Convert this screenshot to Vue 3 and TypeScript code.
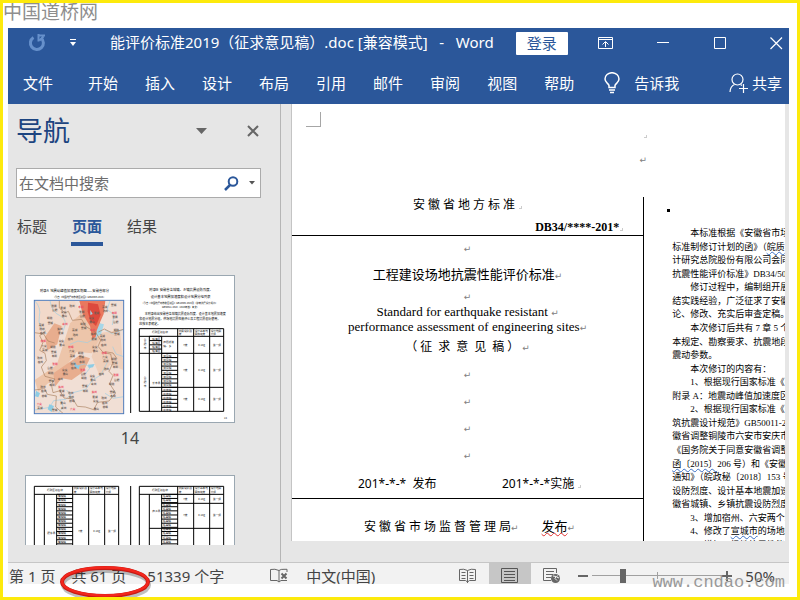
<script setup lang="ts">
import { ref } from 'vue'

interface Line { indent?: boolean; pre?: string; mark?: string; post?: string }
interface Label { x: number; y: number; text: string; red: boolean }

const menus: string[] = ['开始', '插入', '设计', '布局', '引用', '邮件', '审阅', '视图', '帮助']
const tabs: string[] = ['标题', '页面', '结果']
const activeTab = ref('页面')
const query = ref('')
const zoom = ref(50)

const lines: Line[] = [
  { indent: true, pre: '本标准根据《安徽省市场监' },
  { pre: '标准制修订计划的函》（', mark: '皖质' },
  { pre: '计研究总院股份有限公司会同' },
  { pre: '抗震性能评价标准》DB34/5006' },
  { indent: true, pre: '修订过程中，编制组开展' },
  { pre: '结实践经验，广泛征求了安徽' },
  { pre: '论、修改、充实后审查定稿。' },
  { indent: true, pre: '本次修订后共有 7 章 5 个' },
  { pre: '本规定、勘察要求、抗震地段' },
  { pre: '震动参数。' },
  { indent: true, pre: '本次修订的内容有：' },
  { indent: true, pre: '1、根据现行国家标准《中' },
  { pre: '附录 A：地震动峰值加速度区分' },
  { indent: true, pre: '2、根据现行国家标准《中' },
  { pre: '筑抗震设计规范》GB50011-20' },
  { pre: '徽省调整铜陵市六安市安庆市' },
  { pre: '《国务院关于同意安徽省调整' },
  { mark: '函〔2015〕', post: '206 号）和《安徽' },
  { pre: '通知》（皖政秘〔2018〕153 号' },
  { pre: '设防烈度、设计基本地震加速' },
  { pre: '徽省城镇、乡镇抗震设防烈度' },
  { indent: true, pre: '3、增加宿州、六安两个城' },
  { indent: true, pre: '4、修改了', mark: '宣城市', post: '的场地地' },
  { indent: true, pre: '5、增加了场地抗震性能' },
]

const places = ['宿州', '阜阳', '亳州', '蚌埠', '淮南', '滁州', '六安', '合肥', '巢湖', '芜湖', '铜陵', '安庆', '池州', '宣城', '黄山']
const labels: Label[] = []
for (let row = 0; row < 19; row++) {
  for (let col = 0; col < 8; col++) {
    const n = row * 8 + col
    if ((n * 7) % 11 < 3) continue
    labels.push({
      x: 50 + col * 31 + ((n * 13) % 17),
      y: 106 + row * 17 + ((n * 5) % 11),
      text: places[(n * 4 + row) % places.length],
      red: n % 11 === 4,
    })
  }
}

const smallRows = (from: number, to: number, count: number): number[] =>
  Array.from({ length: count }, (_, i) => from + ((to - from) * i) / count)
const groupA = smallRows(199, 250, 4)
const groupB = smallRows(250, 352, 8)
const groupC = smallRows(352, 424, 6)
const groupD = smallRows(223, 384, 13)
const groupE = smallRows(223, 384, 13)
</script>

<template>
  <div class="frame">
    <div class="brand">中国道桥网</div>
    <div class="window">
      <header class="ribbon">
        <div class="titlebar">
          <button class="icon undo" aria-label="重复">
            <svg width="18" height="18" viewBox="0 0 18 18" fill="none" stroke="#6690cb">
              <path d="M5.500 3.500A6.500 6.500 0 1 0 13 4" stroke-width="3" /><path d="M10.500 0v7.500M10.500 1.500H17M11.500 6.500l4-4" stroke-width="2" />
            </svg>
          </button>
          <button class="icon more" aria-label="自定义快速访问工具栏">
            <svg width="6" height="8" viewBox="0 0 6 8"><path d="M0 0h6v1H0zM0 3h6L3 7z" fill="#fff" /></svg>
          </button>
          <h1>能评价标准2019（征求意见稿）.doc [兼容模式] &nbsp;&nbsp;-&nbsp;&nbsp; Word</h1>
          <button class="login">登录</button>
          <div class="winctl">
            <button class="icon" aria-label="功能区显示选项">
              <svg width="16" height="14" viewBox="0 0 16 14" fill="none" stroke="#fff"><path d="M.5 1.500h14v11H.5zM.5 3.500h14M7.500 11V6M4.500 8.500l3-3 3 3" /></svg>
            </button>
            <button class="icon" aria-label="最小化">
              <svg width="13" height="14" viewBox="0 0 13 14"><path d="M0 6.500h12" stroke="#fff" /></svg>
            </button>
            <button class="icon" aria-label="最大化">
              <svg width="13" height="14" viewBox="0 0 13 14"><path d="M.5 1.500h11v11H.5z" fill="none" stroke="#fff" /></svg>
            </button>
            <button class="icon" aria-label="关闭">
              <svg width="13" height="14" viewBox="0 0 13 14"><path d="m.5 1.500 11.500 11.500M12 1.500.5 13" stroke="#fff" stroke-width="1.200" /></svg>
            </button>
          </div>
        </div>
        <nav class="menubar">
          <button class="file">文件</button>
          <button v-for="m in menus" :key="m">{{ m }}</button>
          <button class="tell">
            <svg width="16" height="22" viewBox="0 0 16 22" fill="none" stroke="#fff" stroke-width="1.500">
              <path d="M5 15.500v-2C4.500 11.500 1 10.500 1 7a7 6.300 0 0 1 14 0c0 3.500-3.500 4.500-4 6.500v2z" /><path d="M5 18h6M6 20.500h4" />
            </svg>
            告诉我
          </button>
          <button class="share">
            <svg width="19" height="20" viewBox="0 0 19 20" fill="none" stroke="#fff" stroke-width="1.200">
              <circle cx="8.500" cy="6.500" r="5.500" /><path d="M1 19c.2-4 2-6.500 4.500-7.500M11.500 11.500l1.500 1M14.500 11v9M10 15.500h9" />
            </svg>
            共享
          </button>
        </nav>
      </header>

      <main class="workspace">
        <aside class="navpane">
          <div class="navhead">
            <h2>导航</h2>
            <button class="icon" aria-label="任务窗格选项"><svg width="11" height="6" viewBox="0 0 11 6"><path d="M0 0h11L5.500 6z" fill="#666" /></svg></button>
            <button class="icon" aria-label="关闭"><svg width="12" height="12" viewBox="0 0 12 12"><path d="m1 1 10 10M11 1 1 11" stroke="#666" stroke-width="2" /></svg></button>
          </div>
          <div class="search">
            <input v-model="query" type="text" aria-label="在文档中搜索" placeholder="在文档中搜索" />
            <button class="icon" aria-label="搜索">
              <svg width="15" height="15" viewBox="0 0 15 15" fill="none" stroke="#2b579a" stroke-width="2"><circle cx="9" cy="5.500" r="4.300" /><path d="m6 9-5 5" stroke-width="2.500" /></svg>
            </button>
            <button class="icon" aria-label="搜索选项"><svg width="6" height="4" viewBox="0 0 6 4"><path d="M0 0h6L3 3.500z" fill="#555" /></svg></button>
          </div>
          <div class="tabs">
            <button v-for="t in tabs" :key="t" :class="{ active: t === activeTab }" @click="activeTab = t">{{ t }}</button>
          </div>
          <div class="thumbs">
            <figure>
              <svg class="sheet" viewBox="18 18 624 438" role="img" aria-label="第 14 页">
                <g class="tiny">
                  <text x="60" y="67">附录A&#160; 地震动峰值加速度区划图——安徽省部分</text>
                  <text x="98" y="84" class="sub">（引自《中国地震动参数区划图》GB18306-2015）</text>
                  <text x="388" y="63">附录B&#160; 安徽省各城镇、乡镇抗震设防烈度、</text>
                  <text x="392" y="84">设计基本地震加速度和设计地震分组列表</text>
                  <text x="364" y="102" class="sub">（引自《中国地震动参数区划图》GB18306-2015及《建筑抗震设计规范》</text>
                  <text x="426" y="114" class="sub">GB50011-2010（2016年版）条文）</text>
                  <text x="374" y="135" class="para">本附录给出安徽省各城镇抗震设防烈度、设计基本地震加速度</text>
                  <text x="358" y="149" class="para">和设计地震分组，供场地抗震性能评价及工程抗震设防使用，</text>
                  <text x="358" y="164" class="para">应按本表确定。</text>
                </g>
                <path d="M332 48v381" stroke="#000" stroke-width="3" />
                <svg x="44" y="92" width="267" height="338" viewBox="44 92 267 338">
                  <rect x="44" y="92" width="267" height="338" fill="#f1dfd5" />
                  <path d="M44 92h120l20 50-70 40-20 60-50 20z" fill="#f2d9ca" />
                  <path d="M235 190 300 180 311 300 270 285 240 320 215 260z" fill="#efcfba" />
                  <path d="M150 160 185 130 240 205 215 250 170 245 130 300 55 365 44 330 110 285z" fill="#edc5aa" />
                  <path d="M75 200l28-40 22 8-13 55-30 18zM100 310l80-55 30 10-20 40-35 25-30-5-20 25z" fill="#e8ad8e" />
                  <path d="M178 92h78l-5 40-11 25 3 25-25 28-8-42-22-35z" fill="#e9785e" />
                  <path d="M204 98l30 5 8 31-14 34-17-15-8-29z" fill="#dd493d" />
                  <path d="m211 120 7 12-7 3zM239 160l13 3-9 29-16 12 3-22z" fill="#a6d7e8" />
                  <g fill="none" stroke="#9fcfe4" stroke-width="2">
                    <path d="M44 92q20 20 14 48t22 52M90 92q5 35 30 45t10 45M227 203l-25 15-28-5-24 10M270 92l-8 26 20 17-5 30M255 180l24 12 32-14M278 230l10 22 23 8M44 420l45-8 12-20 36-4 22-20 38-10 20-27 25-16 20-38" />
                    <path d="M155 278l16 10 22-6 18 10-15 20M255 370l25 15 31-5M120 388l10 22-15 20M140 360l20 30" />
                  </g>
                  <path d="m160 272 12 15 8-3-4 14-12-8zM204 284l20-2-5 10-13 2zM88 403l14 5-7 18-12-8zM48 362l12 8-5 12-10-3z" fill="#8dcce4" />
                  <g fill="none" stroke="#ab8260" stroke-width="2">
                    <path d="M118 92v22l17 15 10-5 12 27 28-3 13 22 28 16 16 25-8 18 16 19 22 4 6 28-11 24 12 13-10 24 18 28-20 24-34 4-12 22-25-8-24-2-13-22-27-3-12-22-21 6-5-25 11-16-30-8-11-28 15-19-4-22-16-9 10-24-10-20 18-14" />
                    <path d="M44 188l27 4 13 21 20 6M44 360l30-4 8 17 27 5-2 33 22 19M235 186l18-9 22 11 36-10M254 245l25 4 12 17" />
                  </g>
                  <text v-for="(l, i) in labels" :key="i" :x="l.x" :y="l.y" class="place" :class="{ red: l.red }">{{ l.text }}</text>
                </svg>
                <rect x="43" y="91" width="268" height="340" fill="none" stroke="#5079b8" stroke-width="3" />
                <g class="grid">
                  <path d="M358 176h253v248H358zM358 199h253M358 250h253M388 352h223M388 199v225M425 199v225M473 176v248M521 176v248M569 176v248" />
                  <path v-for="y in groupA" :key="'a' + y" :d="`M388 ${y}h37`" />
                  <path v-for="y in groupB" :key="'b' + y" :d="`M425 ${y}h48`" />
                  <path v-for="y in groupC" :key="'c' + y" :d="`M425 ${y}h48`" />
                </g>
                <g class="cell">
                  <text x="396" y="190">行政区划名称</text><text x="476" y="186">抗震设防烈</text><text x="476" y="195">度</text>
                  <text x="524" y="186">设计基本地</text><text x="524" y="195">震加速度</text><text x="572" y="186">设计地震</text><text x="572" y="195">分组</text>
                  <text v-for="y in groupA" :key="y" x="397" :y="y + 10">瑶海区</text>
                  <text v-for="y in groupB" :key="y" x="430" :y="y + 10">双凤镇</text>
                  <text v-for="y in groupC" :key="y" x="430" :y="y + 10">店埠镇</text>
                  <text x="430" y="220">庐阳街道</text><text x="430" y="231">镇、乡</text>
                  <text x="371" y="214">合</text><text x="371" y="225">肥</text><text x="371" y="237">市</text>
                  <text x="371" y="327">合</text><text x="371" y="339">肥</text><text x="371" y="350">市</text><text x="397" y="341">长丰县</text>
                  <template v-for="y in [227, 304, 391]" :key="y"><text x="490" :y="y">7度</text><text x="535" :y="y">0.10g</text><text x="579" :y="y">第一组</text></template>
                  <text x="612" y="447">14</text>
                </g>
              </svg>
              <figcaption>14</figcaption>
            </figure>
            <figure>
              <svg class="sheet" viewBox="18 168 624 438" role="img" aria-label="第 15 页">
                <path d="M332 198v381" stroke="#000" stroke-width="3" />
                <g class="grid">
                  <path d="M43 199h253v380H43zM43 223h253M73 223v356M110 223v356M158 199v380M206 199v380M254 199v380" />
                  <path v-for="y in groupD" :key="y" :d="`M110 ${y}h48`" />
                  <path d="M358 199h253v380H358zM358 223h253M388 223v356M425 223v356M473 199v380M521 199v380M569 199v380M425 250h186M388 325h223" />
                  <path v-for="y in groupE" :key="'e' + y" :d="`M425 ${y}h48`" />
                </g>
                <g class="cell">
                  <template v-for="x in [0, 315]" :key="x">
                    <text :x="x + 81" y="214">行政区划名称</text><text :x="x + 161" y="208">抗震设防烈</text><text :x="x + 161" y="218">度</text>
                    <text :x="x + 209" y="208">设计基本地</text><text :x="x + 209" y="218">震加速度</text><text :x="x + 257" y="208">设计地震</text><text :x="x + 257" y="218">分组</text>
                  </template>
                  <text v-for="y in groupD.slice(0, 12)" :key="y" x="114" :y="y + 9">撮镇镇</text>
                  <text v-for="y in groupE.slice(0, 12)" :key="'e' + y" x="429" :y="y + 9">柘皋镇</text>
                  <text x="82" y="343">肥东县</text><text x="175" y="337">7度</text><text x="220" y="337">0.10g</text><text x="264" y="337">第一组</text>
                  <text x="397" y="277">庐江县</text>
                  <template v-for="y in [239, 289]" :key="y"><text x="490" :y="y">7度</text><text x="535" :y="y">0.10g</text><text x="579" :y="y">第一组</text></template>
                </g>
              </svg>
            </figure>
          </div>
        </aside>

        <article class="document">
          <section class="cover">
            <div class="margin">
              <i class="corner"></i>
              <div class="marks"><i class="dot"></i><span class="ret">↵</span></div>
            </div>
            <div class="sheetbody">
              <div class="issuer">安 徽 省 地 方 标 准<i class="dot"></i></div>
              <div class="code">DB34/****-201*<i class="dot"></i></div>
              <div class="row first"><span class="ret">↵</span></div>
              <h3>工程建设场地抗震性能评价标准<span class="ret">↵</span></h3>
              <div class="row short"><span class="ret">↵</span></div>
              <p class="en">Standard for earthquake resistant <span class="ret">↵</span></p>
              <p class="en">performance assessment of engineering sites<span class="ret">↵</span></p>
              <p class="draft">（&nbsp;征&nbsp; 求&nbsp; 意&nbsp; 见&nbsp; 稿&nbsp;）&nbsp;<span class="ret">↵</span></p>
              <div v-for="n in 4" :key="n" class="row"><span class="ret">↵</span></div>
              <div class="dates"><span>201*-*-*&nbsp; 发布</span><span>201*-*-*实施<i class="dot"></i></span></div>
              <div class="publisher">
                <span>安 徽 省 市 场 监 督 管 理 局<span class="ret">↵</span></span>
                <span class="release"><span class="wrong">发布</span><span class="ret">↵</span></span>
              </div>
            </div>
          </section>
          <section class="preface">
            <i class="bullet"></i>
            <div class="lines">
              <div v-for="(l, i) in lines" :key="i" :class="{ indent: l.indent }">{{ l.pre }}<span v-if="l.mark" class="hint">{{ l.mark }}</span>{{ l.post }}</div>
            </div>
          </section>
        </article>
      </main>

      <footer class="status">
        <span class="pageno">第 1 页</span>
        <span class="total">共 61 页</span>
        <span class="words">51339 个字</span>
        <svg class="proof" width="18" height="15" viewBox="0 0 18 15" fill="none" stroke="#666">
          <path d="M9 2.500Q5 .5.5 1.500v11H7l2 1.500 2-1.500h6M9 2.500V14M9 2.500q2-1.500 5-1.200h3V4" /><path d="m11.500 5.500 5 5m0-5-5 5" stroke-width="2" />
        </svg>
        <span>中文(中国)</span>
        <div class="views">
          <button class="icon" aria-label="阅读视图">
            <svg width="18" height="16" viewBox="0 0 18 16" fill="none" stroke="#666"><path d="M8.500 2.500Q5 .5.5 1.500v11h6l2 1.500 2-1.500h6v-11q-4.500-1-8 1V15M2.500 4.500h4m-4 3h4m-4 3h4m4-6h4m-4 3h4m-4 3h4" /></svg>
          </button>
          <button class="icon on" aria-label="页面视图">
            <svg width="18" height="17" viewBox="0 0 18 17" fill="none" stroke="#555"><path d="M.5 1.500h16v14H.5zM3 4.500h11M3 7.500h11M3 10.500h11M3 13.500h11" /></svg>
          </button>
          <button class="icon" aria-label="Web 版式视图">
            <svg width="18" height="17" viewBox="0 0 18 17" fill="none" stroke="#666"><path d="M8 13.500H.5v-12h13V6M3 4.500h8M3 7.500h7M3 10.500h5" /><circle cx="12.500" cy="11.500" r="4.500" fill="#666" stroke="none" /><path d="m10 9 3 .5-1 2 2 2M14.500 8.500l-1 1.500 2.500 1" stroke="#f1f1f1" /></svg>
          </button>
        </div>
        <button class="icon minus" aria-label="缩小"><svg width="10" height="4" viewBox="0 0 10 4"><path d="M0 1h10v2H0z" fill="#666" /></svg></button>
        <input v-model="zoom" class="slider" type="range" min="10" max="190" aria-label="显示比例" />
        <button class="icon" aria-label="放大"><svg width="10" height="10" viewBox="0 0 10 10"><path d="M5 0v10M0 5h10" stroke="#666" stroke-width="2" /></svg></button>
        <span class="percent">{{ zoom }}%</span>
      </footer>
    </div>
    <svg class="ring" width="98" height="36" viewBox="0 0 98 36" fill="none">
      <ellipse cx="49" cy="20" rx="43" ry="14" stroke="#000" stroke-opacity=".25" stroke-width="4" />
      <ellipse cx="48" cy="17" rx="43" ry="14" stroke="#c51a14" stroke-width="4" />
      <ellipse cx="48" cy="16.500" rx="43" ry="14" stroke="#f3261c" stroke-width="2.500" />
    </svg>
    <div class="site">www.cndao.com</div>
  </div>
</template>

<style>
body { margin: 0; }
</style>

<style scoped>
* { box-sizing: border-box; }
h1, h2, h3, p, figure { margin: 0; font-weight: 400; }
button { border: 0; padding: 0; background: none; font: inherit; color: inherit; white-space: nowrap; }
svg { display: block; flex: none; }
.frame {
  position: relative; height: 100vh; display: flex; flex-direction: column;
  border: 3px solid #fdea0c; padding: 0 8px 13px 5px; background: #fff; overflow: hidden;
  font: 15px/20px "Noto Sans", "Noto Sans CJK SC", sans-serif; color: #444;
}
.brand { height: 25px; flex: none; margin-left: -5px; font: 19px/20px "Liberation Serif", "Noto Sans CJK SC", serif; color: #8e8e8e; }
.window { flex: 1; min-height: 0; display: flex; flex-direction: column; background: #e6e6e6; overflow: hidden; }
.icon { display: flex; align-items: center; justify-content: center; }

.ribbon { flex: none; background: #2b579a; color: #fff; padding-bottom: 1px; }
.titlebar { display: flex; align-items: center; height: 30px; padding: 0 6px 0 20px; }
.more { margin-left: 24px; }
.titlebar h1 { margin-left: 34px; font-size: 15px; line-height: 28px; padding-bottom: 2px; white-space: nowrap; }
.login { width: 52px; height: 23px; margin-left: 22px; background: #fff; color: #2b579a; border-radius: 1px; }
.winctl { flex: 1; display: flex; justify-content: space-between; padding-left: 30px; }
.menubar { display: flex; align-items: center; gap: 27px; height: 39px; margin-top: 6px; padding: 0 7px 2px 15px; }
.file { margin-right: 8px; }
.tell, .share { display: flex; align-items: center; gap: 14px; }
.tell { margin-left: 3px; }
.share { gap: 4px; margin-left: auto; }

.workspace { flex: 1; min-height: 0; display: flex; }
.navpane { flex: none; width: 273px; display: flex; flex-direction: column; padding: 14px 19px 0 8px; border-right: 1px solid #b5b5b5; }
.navhead { display: flex; align-items: center; gap: 40px; height: 28px; padding: 0 2px 2px 0; }
.navhead h2 { flex: 1; font-size: 27px; line-height: 28px; color: #1c4480; }
.search { display: flex; align-items: center; gap: 10px; height: 30px; margin-top: 22px; padding: 0 5px 0 2px; border: 1px solid #ababab; background: #fff; }
.search input { flex: 1; min-width: 0; border: 0; padding: 0; outline: 0; background: none; font: inherit; color: #444; }
.search input::placeholder { color: #6d6d6d; opacity: 1; }
.tabs { display: flex; gap: 23px; margin-top: 18px; }
.tabs button { height: 30px; padding: 0 1px 6px; border-bottom: 4px solid transparent; }
.tabs .active { color: #2b579a; border-color: #2b579a; font-weight: 700; }
.thumbs { flex: 1; min-height: 0; overflow: hidden; margin: 29px 0 17px; padding-left: 9px; }
.sheet { width: 210px; height: 148px; border: 1px solid #9aa7b1; background: #fff; }
figcaption { width: 210px; padding: 5px 0 27px; text-align: center; font-size: 16px; }
.tiny { font: 10px "Noto Sans CJK SC", sans-serif; }
.tiny .sub { font-size: 7px; }
.tiny .para { font-size: 9px; }
.place { font: 700 8px "Noto Sans CJK SC", sans-serif; fill: #6b5c55; }
.place.red { fill: #ec4b62; }
.grid { fill: none; stroke: #000; stroke-width: 3; }
.cell { font: 8px "Noto Sans CJK SC", sans-serif; fill: #111; }

.document { flex: 1; min-width: 0; display: grid; grid-template-columns: minmax(0, 5fr) minmax(0, 2fr); margin: 0 4px 21px 10px; border-left: 1px solid #c4c4c4; background: #fff; overflow: hidden; color: #000; }
.cover { display: flex; flex-direction: column; min-height: 0; font: 12px/16px "Liberation Serif", "Noto Sans CJK SC", serif; }
.margin { display: flex; justify-content: space-between; height: 93px; padding: 8px 0 0 14px; flex: none; }
.corner { width: 15px; height: 15px; border: solid #a6a6a6; border-width: 0 1px 1px 0; }
.marks { display: flex; flex-direction: column; gap: 16px; padding-top: 23px; margin-right: -3px; }
.dot { display: inline-block; width: 3px; height: 3px; margin-left: 4px; border: solid #ccc; border-width: 0 1px 1px 0; }
.ret { font: 9px/12px "DejaVu Sans", sans-serif; color: #808080; }
.sheetbody { flex: 1; border-right: 1px solid #000; text-align: center; }
.issuer { text-align: center; }
.code { padding: 6px 20px 0 0; border-bottom: 1px solid #000; text-align: right; font-weight: 700; }
.code .dot { margin-left: 1px; }
.row { line-height: 27px; }
.row.first { line-height: 24px; }
.row.short { line-height: 16px; }
h3 { font: 13px/28px "Noto Sans CJK SC", sans-serif; }
.en { font-size: 13px; line-height: 15px; white-space: nowrap; }
.draft { line-height: 27px; }
.dates { display: flex; justify-content: space-between; padding: 0 62px 0 66px; border-bottom: 1px solid #000; font-family: "Noto Sans", "Noto Sans CJK SC", sans-serif; line-height: 29px; }
.publisher { display: flex; justify-content: space-between; padding: 14px 68px 0 72px; line-height: 28px; }
.release { font-size: 13px; }
.wrong { text-decoration: underline wavy #e03030 1px; }
.preface { display: flex; flex-direction: column; min-height: 0; padding: 105px 0 0 23px; overflow: hidden; }
.bullet { flex: none; width: 3px; height: 3px; background: #000; }
.lines { flex: 1; min-height: 0; display: flex; flex-direction: column; justify-content: space-between; margin: 15px 0 -11px; padding-left: 5px; font: 9px/13px "Liberation Serif", "Noto Sans CJK SC", serif; white-space: nowrap; }
.indent { padding-left: 18px; }
.hint { text-decoration: underline wavy #3a6fc4 1px; }

.status { flex: none; display: flex; align-items: center; height: 22px; border-top: 1px solid #c6c6c6; background: #f2f2f2; white-space: nowrap; overflow: hidden; line-height: 26px; padding: 4px 14px 0 1px; }
.total { margin-left: 16px; }
.words { margin-left: 21px; }
.proof { margin: 0 18px 0 46px; }
.views { display: flex; height: 26px; margin: 0 5px 0 auto; }
.views .icon { width: 42px; }
.views .on { background: #c6c6c6; }
.slider { width: 130px; height: 16px; margin: 0 0 0 4px; appearance: none; background: linear-gradient(#a0a0a0, #a0a0a0) center / 1px 7px no-repeat, linear-gradient(#a0a0a0, #a0a0a0) center / 100% 1px no-repeat; }
.slider::-webkit-slider-thumb { appearance: none; width: 6px; height: 14px; background: #666; }
.percent { margin-left: 13px; }
.ring { position: absolute; left: 54px; bottom: -4px; }
.site { position: absolute; right: 12px; bottom: 4px; font: 17px/20px "Liberation Mono", monospace; color: #999; }
</style>
